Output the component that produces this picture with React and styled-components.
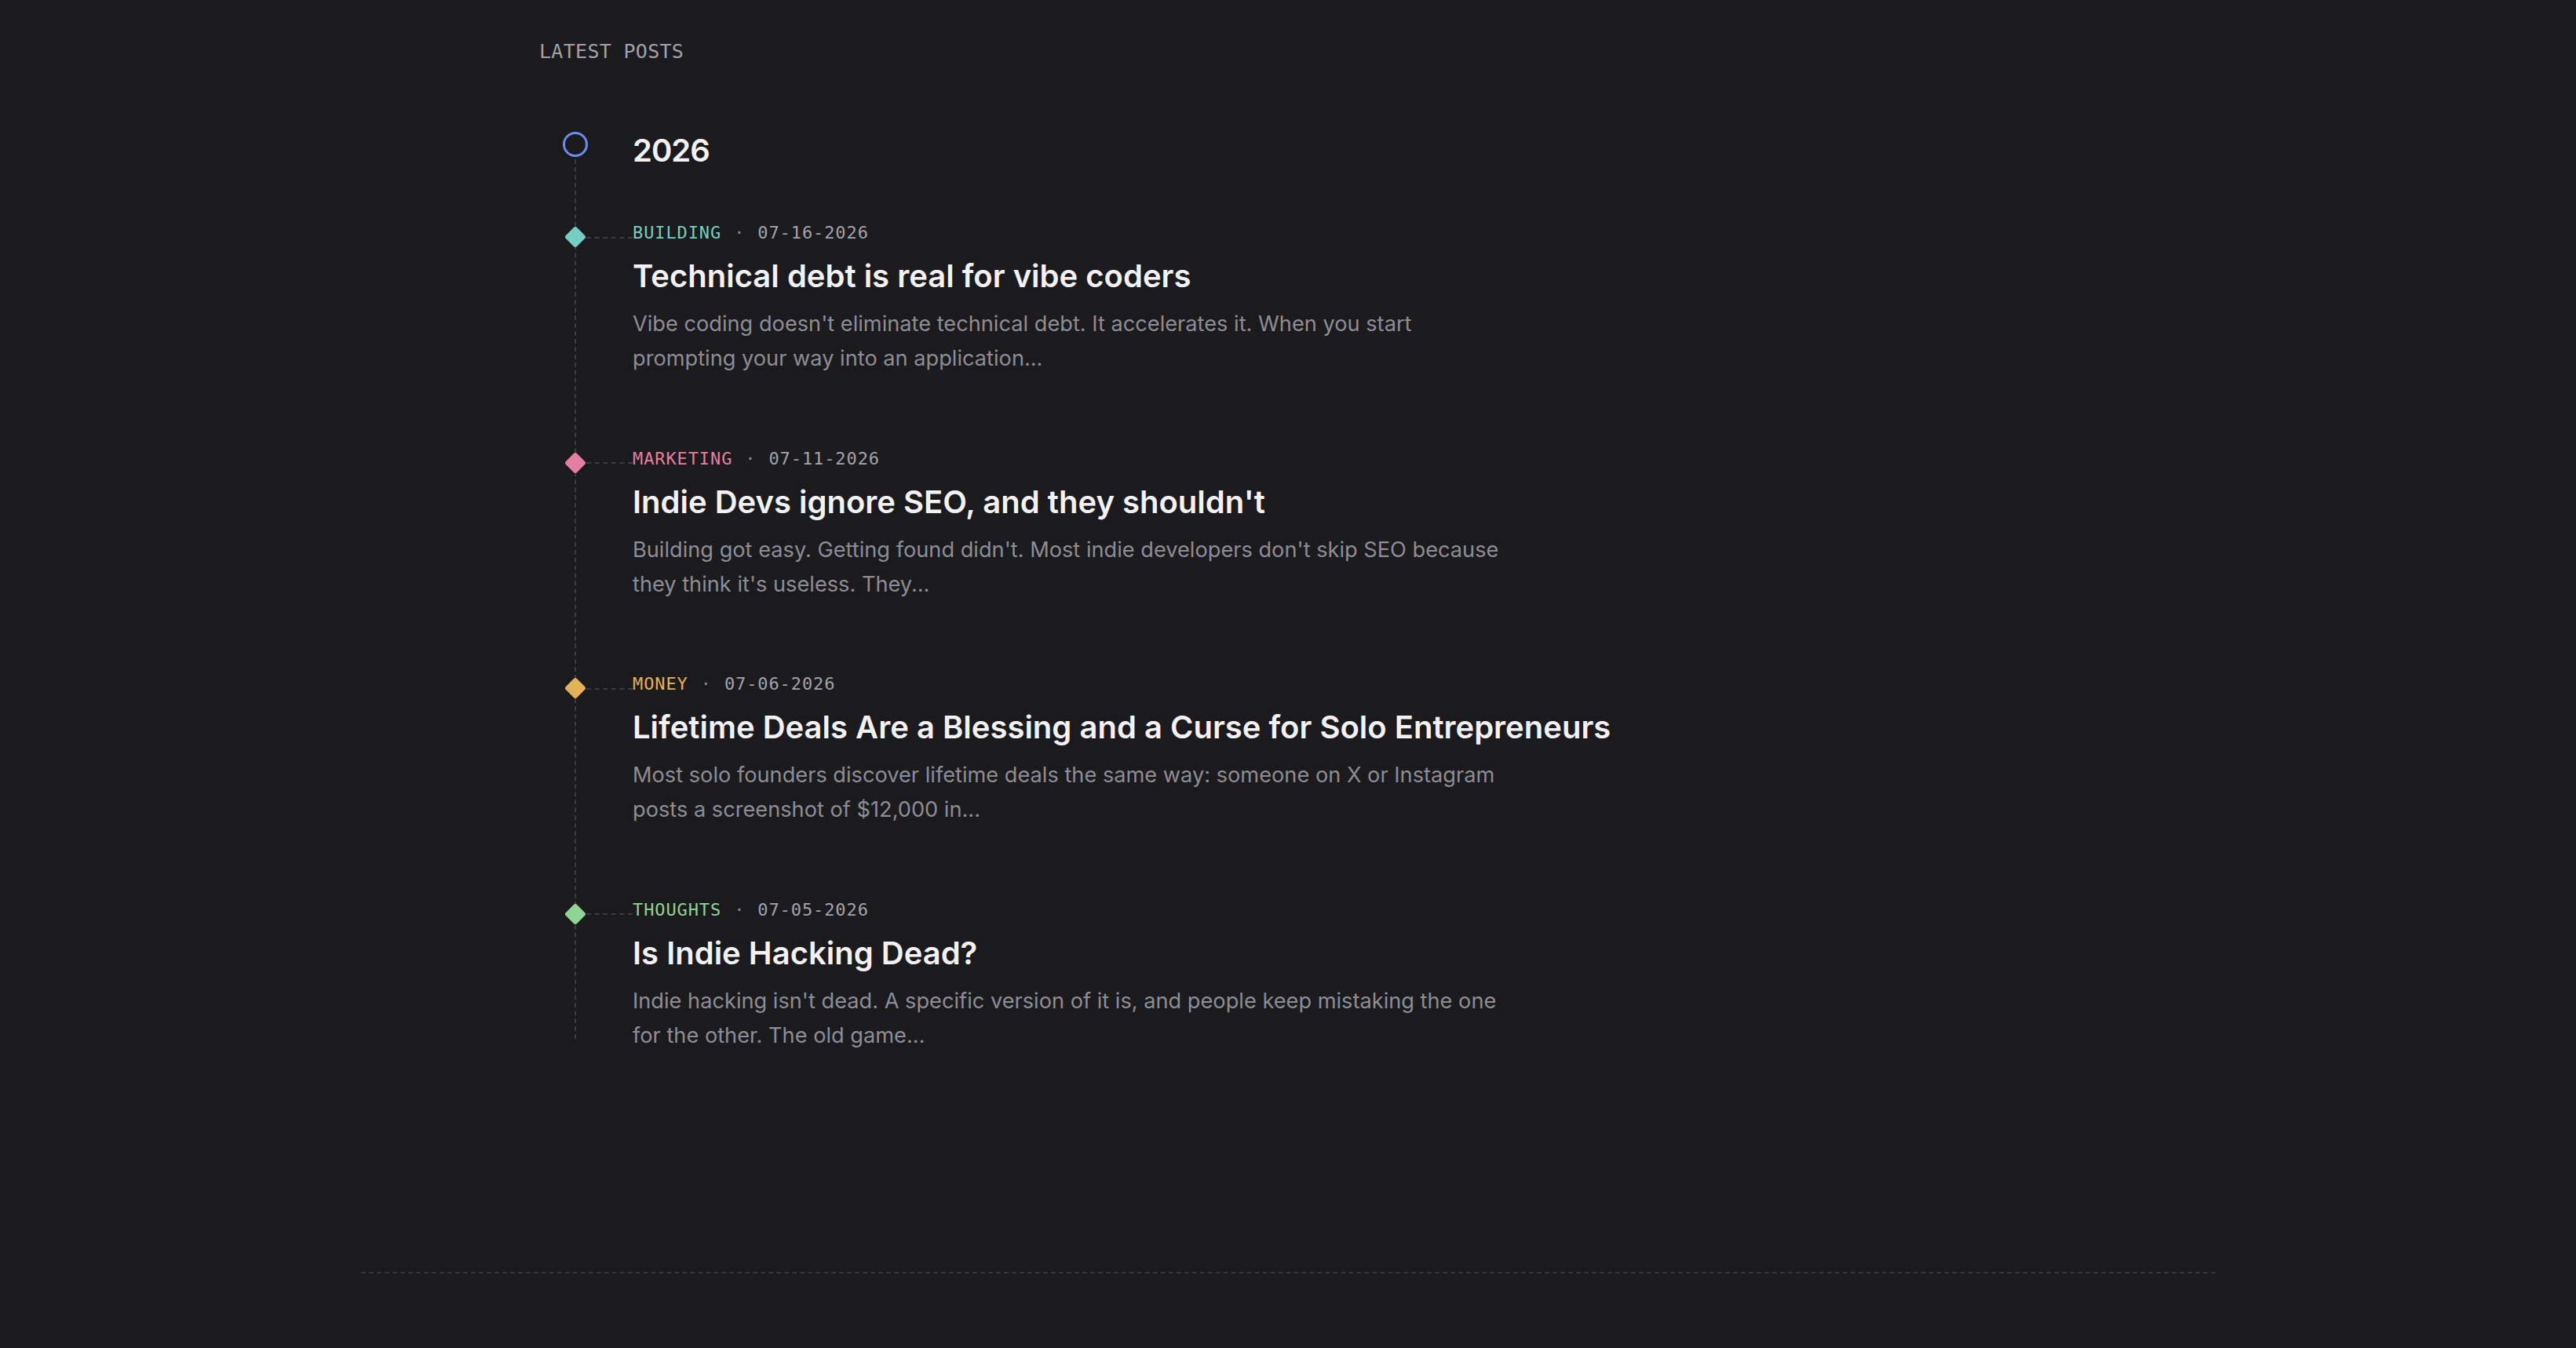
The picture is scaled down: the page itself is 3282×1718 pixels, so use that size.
import React from 'react'
import styled, { createGlobalStyle } from 'styled-components'

const GlobalStyle = createGlobalStyle`
  html, body {
    margin: 0;
    padding: 0;
    background: #1b1b1d;
  }
  body {
    min-height: 100vh;
    font-family: Inter, "Noto Sans", sans-serif;
    -webkit-font-smoothing: antialiased;
  }
`

const posts = [
  {
    category: 'Building',
    color: '#74cfc3',
    date: '07-16-2026',
    title: 'Technical debt is real for vibe coders',
    excerpt:
      "Vibe coding doesn't eliminate technical debt. It accelerates it. When you start prompting your way into an application...",
  },
  {
    category: 'Marketing',
    color: '#e47fa1',
    date: '07-11-2026',
    title: "Indie Devs ignore SEO, and they shouldn't",
    excerpt:
      "Building got easy. Getting found didn't. Most indie developers don't skip SEO because they think it's useless. They...",
  },
  {
    category: 'Money',
    color: '#e3b257',
    date: '07-06-2026',
    title: 'Lifetime Deals Are a Blessing and a Curse for Solo Entrepreneurs',
    excerpt:
      'Most solo founders discover lifetime deals the same way: someone on X or Instagram posts a screenshot of $12,000 in...',
  },
  {
    category: 'Thoughts',
    color: '#8fd596',
    date: '07-05-2026',
    title: 'Is Indie Hacking Dead?',
    excerpt:
      "Indie hacking isn't dead. A specific version of it is, and people keep mistaking the one for the other. The old game...",
  },
]

export default function App() {
  return (
    <React.Fragment>
      <GlobalStyle />
      <Page>
        <Main>
          <SectionLabel>Latest posts</SectionLabel>
          <YearGroup>
            <YearHeader>
              <YearRing />
              <YearTitle>2026</YearTitle>
            </YearHeader>
            <PostList>
              {posts.map((post) => (
                <PostItem key={post.title}>
                  <Marker>
                    <Diamond $color={post.color} />
                    <Connector />
                  </Marker>
                  <PostBody>
                    <Meta>
                      <Category $color={post.color}>{post.category}</Category>
                      <Dot>·</Dot>
                      <PostDate>{post.date}</PostDate>
                    </Meta>
                    <PostTitle href="#">{post.title}</PostTitle>
                    <Excerpt>{post.excerpt}</Excerpt>
                  </PostBody>
                </PostItem>
              ))}
            </PostList>
          </YearGroup>
        </Main>
        <Footer />
      </Page>
    </React.Fragment>
  )
}

const Page = styled.div`
  display: flex;
  flex-direction: column;
  align-items: center;
  min-height: 100vh;
`

const Main = styled.main`
  width: 1908px;
  padding-top: 50px;
  box-sizing: border-box;
`

const SectionLabel = styled.h2`
  margin: 0;
  font-family: "DejaVu Sans Mono", "Liberation Mono", monospace;
  font-size: 25px;
  line-height: 32px;
  font-weight: 400;
  letter-spacing: 0.3px;
  text-transform: uppercase;
  color: #a1a1a9;
`

const YearGroup = styled.section`
  position: relative;
  margin-top: 86px;
  padding-left: 30px;
  display: flex;
  flex-direction: column;
  gap: 66px;

  /* the dashed rail running down from the year ring */
  &::before {
    content: '';
    position: absolute;
    left: 45px;
    top: 35px;
    bottom: 18px;
    border-left: 2px dashed #3b3b41;
  }
`

const YearHeader = styled.div`
  display: flex;
  align-items: flex-start;
  gap: 57px;
`

const YearRing = styled.span`
  width: 32px;
  height: 32px;
  box-sizing: border-box;
  border: 3px solid #6a8df0;
  border-radius: 50%;
  flex-shrink: 0;
`

const YearTitle = styled.h3`
  margin: 0;
  font-size: 40px;
  line-height: 48px;
  font-weight: 600;
  letter-spacing: -1px;
  color: #f2f2f4;
`

const PostList = styled.ul`
  list-style: none;
  margin: 0;
  padding: 0;
  display: flex;
  flex-direction: column;
  gap: 90.5px;
`

const PostItem = styled.li`
  display: flex;
  align-items: flex-start;
`

const Marker = styled.div`
  width: 89px;
  height: 30px;
  margin-top: 5px;
  flex-shrink: 0;
  display: flex;
  align-items: center;
`

const Diamond = styled.span`
  width: 20px;
  height: 20px;
  margin-left: 6px;
  margin-right: 4px;
  border-radius: 3px;
  background: ${(p) => p.$color};
  transform: rotate(45deg);
  flex-shrink: 0;
`

const Connector = styled.span`
  flex: 1;
  height: 0;
  margin-top: 1px;
  border-top: 2px dashed #3b3b41;
`

const PostBody = styled.div`
  display: flex;
  flex-direction: column;
  max-width: 1110px;
`

const Meta = styled.div`
  display: flex;
  align-items: center;
  gap: 16px;
  font-family: "DejaVu Sans Mono", "Liberation Mono", monospace;
  font-size: 22px;
  line-height: 30px;
  letter-spacing: 0.9px;
`

const Category = styled.span`
  text-transform: uppercase;
  color: ${(p) => p.$color};
`

const Dot = styled.span`
  color: #8a8a92;
`

const PostDate = styled.span`
  color: #a3a3ab;
`

const PostTitle = styled.a`
  margin-top: 14px;
  font-size: 40px;
  line-height: 52px;
  font-weight: 600;
  color: #f2f2f4;
  text-decoration: none;
  white-space: nowrap;
`

const Excerpt = styled.p`
  margin: 13px 0 0;
  font-size: 27.2px;
  line-height: 44px;
  color: #8d8d95;
`

const Footer = styled.footer`
  width: 2363px;
  margin-top: auto;
  margin-bottom: 95px;
  border-top: 2px dashed #35353b;
`
